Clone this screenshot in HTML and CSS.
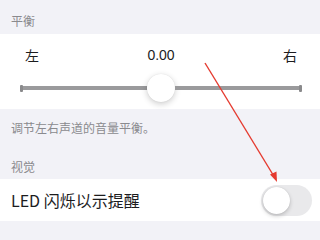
FILE: index.html
```html
<!DOCTYPE html>
<html lang="zh">
<head>
<meta charset="utf-8">
<link rel="stylesheet" href="styles.css">
</head>
<body>
<div class="page">
  <div class="sec-head first">平衡</div>
  <div class="card">
    <div class="labels">
      <span>左</span>
      <span class="val">0.00</span>
      <span>右</span>
    </div>
    <div class="slider">
      <div class="cap"></div>
      <div class="track"></div>
      <div class="thumb"></div>
      <div class="track"></div>
      <div class="cap"></div>
    </div>
  </div>
  <div class="sec-foot">调节左右声道的音量平衡。</div>
  <div class="sec-head second">视觉</div>
  <div class="row">
    <span class="row-title">LED 闪烁以示提醒</span>
    <div class="toggle"><div class="knob"></div></div>
  </div>
  <svg class="arrow" width="320" height="240" viewBox="0 0 320 240">
    <line x1="205" y1="63" x2="275" y2="178" stroke="#e53a2f" stroke-width="1.4"/>
    <polygon points="277,182 270,174.5 276.5,171.5" fill="#e53a2f"/>
  </svg>
</div>
</body>
</html>
```

FILE: styles.css
```css
html, body {
  margin: 0;
  padding: 0;
}
body {
  background: #f2f2f7;
  font-family: "Noto Sans CJK SC", "Noto Sans", sans-serif;
  width: 320px;
  height: 240px;
  overflow: hidden;
}
.page {
  position: relative;
  width: 320px;
  height: 240px;
}
.sec-head {
  color: #8a8a8e;
  font-size: 12px;
  line-height: 14px;
  padding-left: 11px;
  box-sizing: border-box;
}
.sec-head.first {
  height: 34px;
  padding-top: 14px;
}
.sec-head.second {
  height: 20px;
  padding-top: 1px;
}
.card {
  background: #fff;
  height: 75px;
  box-sizing: border-box;
  padding: 11px 18px 0 20px;
}
.labels {
  display: flex;
  justify-content: space-between;
  align-items: center;
  font-size: 14px;
  line-height: 20px;
  color: #1c1c1e;
  padding: 0 5px 0 5px;
}
.labels .val {
  font-family: "Liberation Sans", "Noto Sans", sans-serif;
  font-size: 14px;
  margin-left: 0;
}
.slider {
  display: flex;
  align-items: center;
  height: 28px;
  margin-top: 9px;
}
.track {
  flex: 1;
  height: 4px;
  background: #9a9a9c;
}
.cap {
  width: 3px;
  height: 7px;
  background: #8a8a8c;
  border-radius: 1px;
}
.thumb {
  width: 28px;
  height: 28px;
  border-radius: 50%;
  background: #fff;
  box-shadow: 0 2px 6px rgba(0,0,0,0.2), 0 0 1px rgba(0,0,0,0.12);
}
.sec-foot {
  color: #8a8a8e;
  font-size: 12px;
  line-height: 14px;
  padding: 12px 0 0 11px;
  height: 50px;
  box-sizing: border-box;
}
.row {
  background: #fff;
  height: 42px;
  display: flex;
  align-items: center;
  justify-content: space-between;
  padding: 0 8px 0 11px;
}
.row-title {
  font-size: 16px;
  color: #1c1c1e;
}
.toggle {
  width: 51px;
  height: 31px;
  border-radius: 16px;
  background: #e9e9eb;
  box-sizing: border-box;
  padding: 2px;
  margin-top: 1px;
}
.knob {
  width: 27px;
  height: 27px;
  border-radius: 50%;
  background: #fff;
  box-shadow: 0 2px 4px rgba(0,0,0,0.2), 0 0 1px rgba(0,0,0,0.15);
}
.arrow {
  position: absolute;
  left: 0;
  top: 0;
  pointer-events: none;
}
```
